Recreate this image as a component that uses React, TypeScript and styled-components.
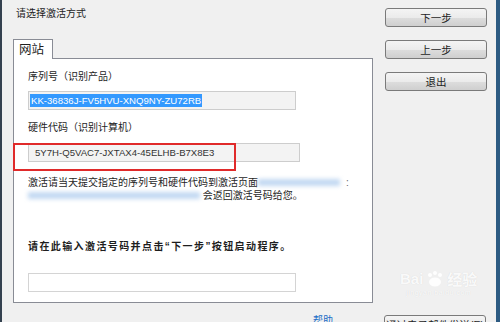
import React from 'react';
import styled, { createGlobalStyle } from 'styled-components';

const GlobalStyle = createGlobalStyle`
    html, body {
        margin: 0;
        padding: 0;
        width: 500px;
        height: 322px;
        overflow: hidden;
        background: #f0f0f0;
    }
    body {
        font-family: "Liberation Sans", "Noto Sans CJK SC", sans-serif;
        font-size: 10px;
        color: #1e1e1e;
    }
`;

const Window = styled.div`
    position: relative;
    width: 500px;
    height: 322px;
    box-sizing: border-box;
    border-left: 2px solid #34414f;
    border-right: 4px solid #2d5b82;
    padding: 8px 9px 0 11px;
    display: grid;
    grid-template-columns: 360px 102px;
    grid-template-rows: auto auto;
    column-gap: 12px;
    overflow: hidden;
`;

const LeftColumn = styled.div`
    display: flex;
    flex-direction: column;
`;

const Title = styled.div`
    line-height: 12px;
    height: 12px;
    padding-left: 3px;
`;

const TabStrip = styled.div`
    display: flex;
    margin-top: 19px;
`;

const Tab = styled.div`
    position: relative;
    z-index: 1;
    width: 40px;
    height: 20px;
    box-sizing: border-box;
    margin-bottom: -1px;
    padding: 2px 0 0 5px;
    background: #fff;
    border: 1px solid #898c95;
    border-bottom: none;
    font-size: 12.5px;
    line-height: 16px;
`;

const Panel = styled.div`
    position: relative;
    height: 245px;
    box-sizing: border-box;
    background: #fff;
    border: 1px solid #898c95;
    padding: 0 0 0 14px;
    display: flex;
    flex-direction: column;
    align-items: flex-start;
`;

interface ILineProps {
    gap: number;
}
const Label = styled.div<ILineProps>`
    margin-top: ${props => props.gap}px;
    line-height: 12px;
    height: 12px;
`;

interface IFieldProps {
    gap: number;
    w: number;
    tone?: 'white' | 'gray';
}
const Field = styled.div<IFieldProps>`
    margin-top: ${props => props.gap}px;
    width: ${props => props.w}px;
    height: 19px;
    box-sizing: border-box;
    border: 1px solid ${props => (props.tone === 'white' ? '#d4d4d4' : '#cdcdcd')};
    background: ${props => (props.tone === 'white' ? '#fff' : '#f3f3f3')};
    display: flex;
    align-items: center;
    padding-left: 1px;
    font-size: 9.6px;
    color: #444;
    white-space: nowrap;
`;

const Selected = styled.span`
    background: #3399ff;
    color: #fff;
    line-height: 13px;
    padding: 0 1px;
`;

const HwCode = styled.span`
    padding-left: 5px;
    color: #333;
`;

const Notice = styled.div`
    margin-top: 14px;
    line-height: 13px;
    white-space: nowrap;
    display: flex;
    flex-direction: column;
`;

const NoticeRow = styled.div`
    display: flex;
    align-items: center;
    height: 13px;
`;

interface IBlurProps {
    w: number;
}
const BlurLink = styled.span<IBlurProps>`
    display: inline-block;
    width: ${props => props.w}px;
    height: 7px;
    background: #c3d9f2;
    filter: blur(2px);
`;

const Colon = styled.span`
    margin-left: 6px;
    color: #666;
`;

const Strong = styled.div`
    margin-top: 39px;
    line-height: 12px;
    font-weight: bold;
    letter-spacing: 1.4px;
    white-space: nowrap;
`;

const Highlight = styled.div`
    position: absolute;
    left: -1px;
    top: 84px;
    width: 223px;
    height: 28px;
    box-sizing: border-box;
    border: 2px solid #e02a2a;
`;

const ButtonColumn = styled.div`
    display: flex;
    flex-direction: column;
    gap: 13px;
`;

const Button = styled.button`
    width: 102px;
    height: 19px;
    box-sizing: border-box;
    border: 1px solid #7a7a7a;
    border-radius: 3px;
    background: linear-gradient(#f4f4f4 0%, #ebebeb 50%, #dddddd 51%, #cfcfcf 100%);
    font-family: inherit;
    font-size: 10.5px;
    color: #1e1e1e;
    padding: 0;
    line-height: 16px;
`;

const Footer = styled.div`
    margin-top: 12px;
    padding-left: 300px;
    line-height: 12px;
    color: #1a6cc6;
`;

const FooterButtons = styled.div`
    margin-top: 12px;
    margin-left: -1px;
`;

const Watermark = styled.div`
    position: absolute;
    left: 398px;
    top: 268px;
    display: flex;
    flex-direction: column;
    align-items: center;
    color: rgba(255, 255, 255, 0.9);
    text-shadow: 0 0 1px rgba(0, 0, 0, 0.12);
    pointer-events: none;
`;

const WatermarkMain = styled.div`
    display: flex;
    align-items: center;
    gap: 3px;
    font-size: 15px;
    font-weight: bold;
`;

const WatermarkSub = styled.div`
    font-size: 7px;
    letter-spacing: 0.5px;
`;

export default function App() {
    return (
        <>
            <GlobalStyle />
            <Window>
                <LeftColumn>
                    <Title>请选择激活方式</Title>
                    <TabStrip>
                        <Tab>网站</Tab>
                    </TabStrip>
                    <Panel>
                        <Label gap={12}>序列号（识别产品）</Label>
                        <Field gap={8} w={268}>
                            <Selected>KK-36836J-FV5HVU-XNQ9NY-ZU72RB</Selected>
                        </Field>
                        <Label gap={12}>硬件代码（识别计算机）</Label>
                        <Field gap={9} w={272}>
                            <HwCode>5Y7H-Q5VAC7-JXTAX4-45ELHB-B7X8E3</HwCode>
                        </Field>
                        <Notice>
                            <NoticeRow>
                                激活请当天提交指定的序列号和硬件代码到激活页面
                                <BlurLink w={82} />
                                <Colon>:</Colon>
                            </NoticeRow>
                            <NoticeRow>
                                <BlurLink w={172} />
                                &nbsp;会返回激活号码给您。
                            </NoticeRow>
                        </Notice>
                        <Strong>请在此输入激活号码并点击“下一步”按钮启动程序。</Strong>
                        <Field gap={20} w={268} tone="white" />
                        <Highlight />
                    </Panel>
                </LeftColumn>
                <ButtonColumn>
                    <Button>下一步</Button>
                    <Button>上一步</Button>
                    <Button>退出</Button>
                </ButtonColumn>
                <Footer>帮助</Footer>
                <FooterButtons>
                    <Button>通过电子邮件发送(E)</Button>
                </FooterButtons>
                <Watermark>
                    <WatermarkMain>
                        Bai
                        <svg width="18" height="16" viewBox="0 0 18 16">
                            <circle cx="4" cy="4" r="2" fill="rgba(255,255,255,0.9)" />
                            <circle cx="9" cy="2" r="2" fill="rgba(255,255,255,0.9)" />
                            <circle cx="14" cy="4" r="2" fill="rgba(255,255,255,0.9)" />
                            <ellipse cx="9" cy="11" rx="6" ry="4.5" fill="rgba(255,255,255,0.9)" />
                        </svg>
                        经验
                    </WatermarkMain>
                    <WatermarkSub>jingyan.baidu.com</WatermarkSub>
                </Watermark>
            </Window>
        </>
    );
}
